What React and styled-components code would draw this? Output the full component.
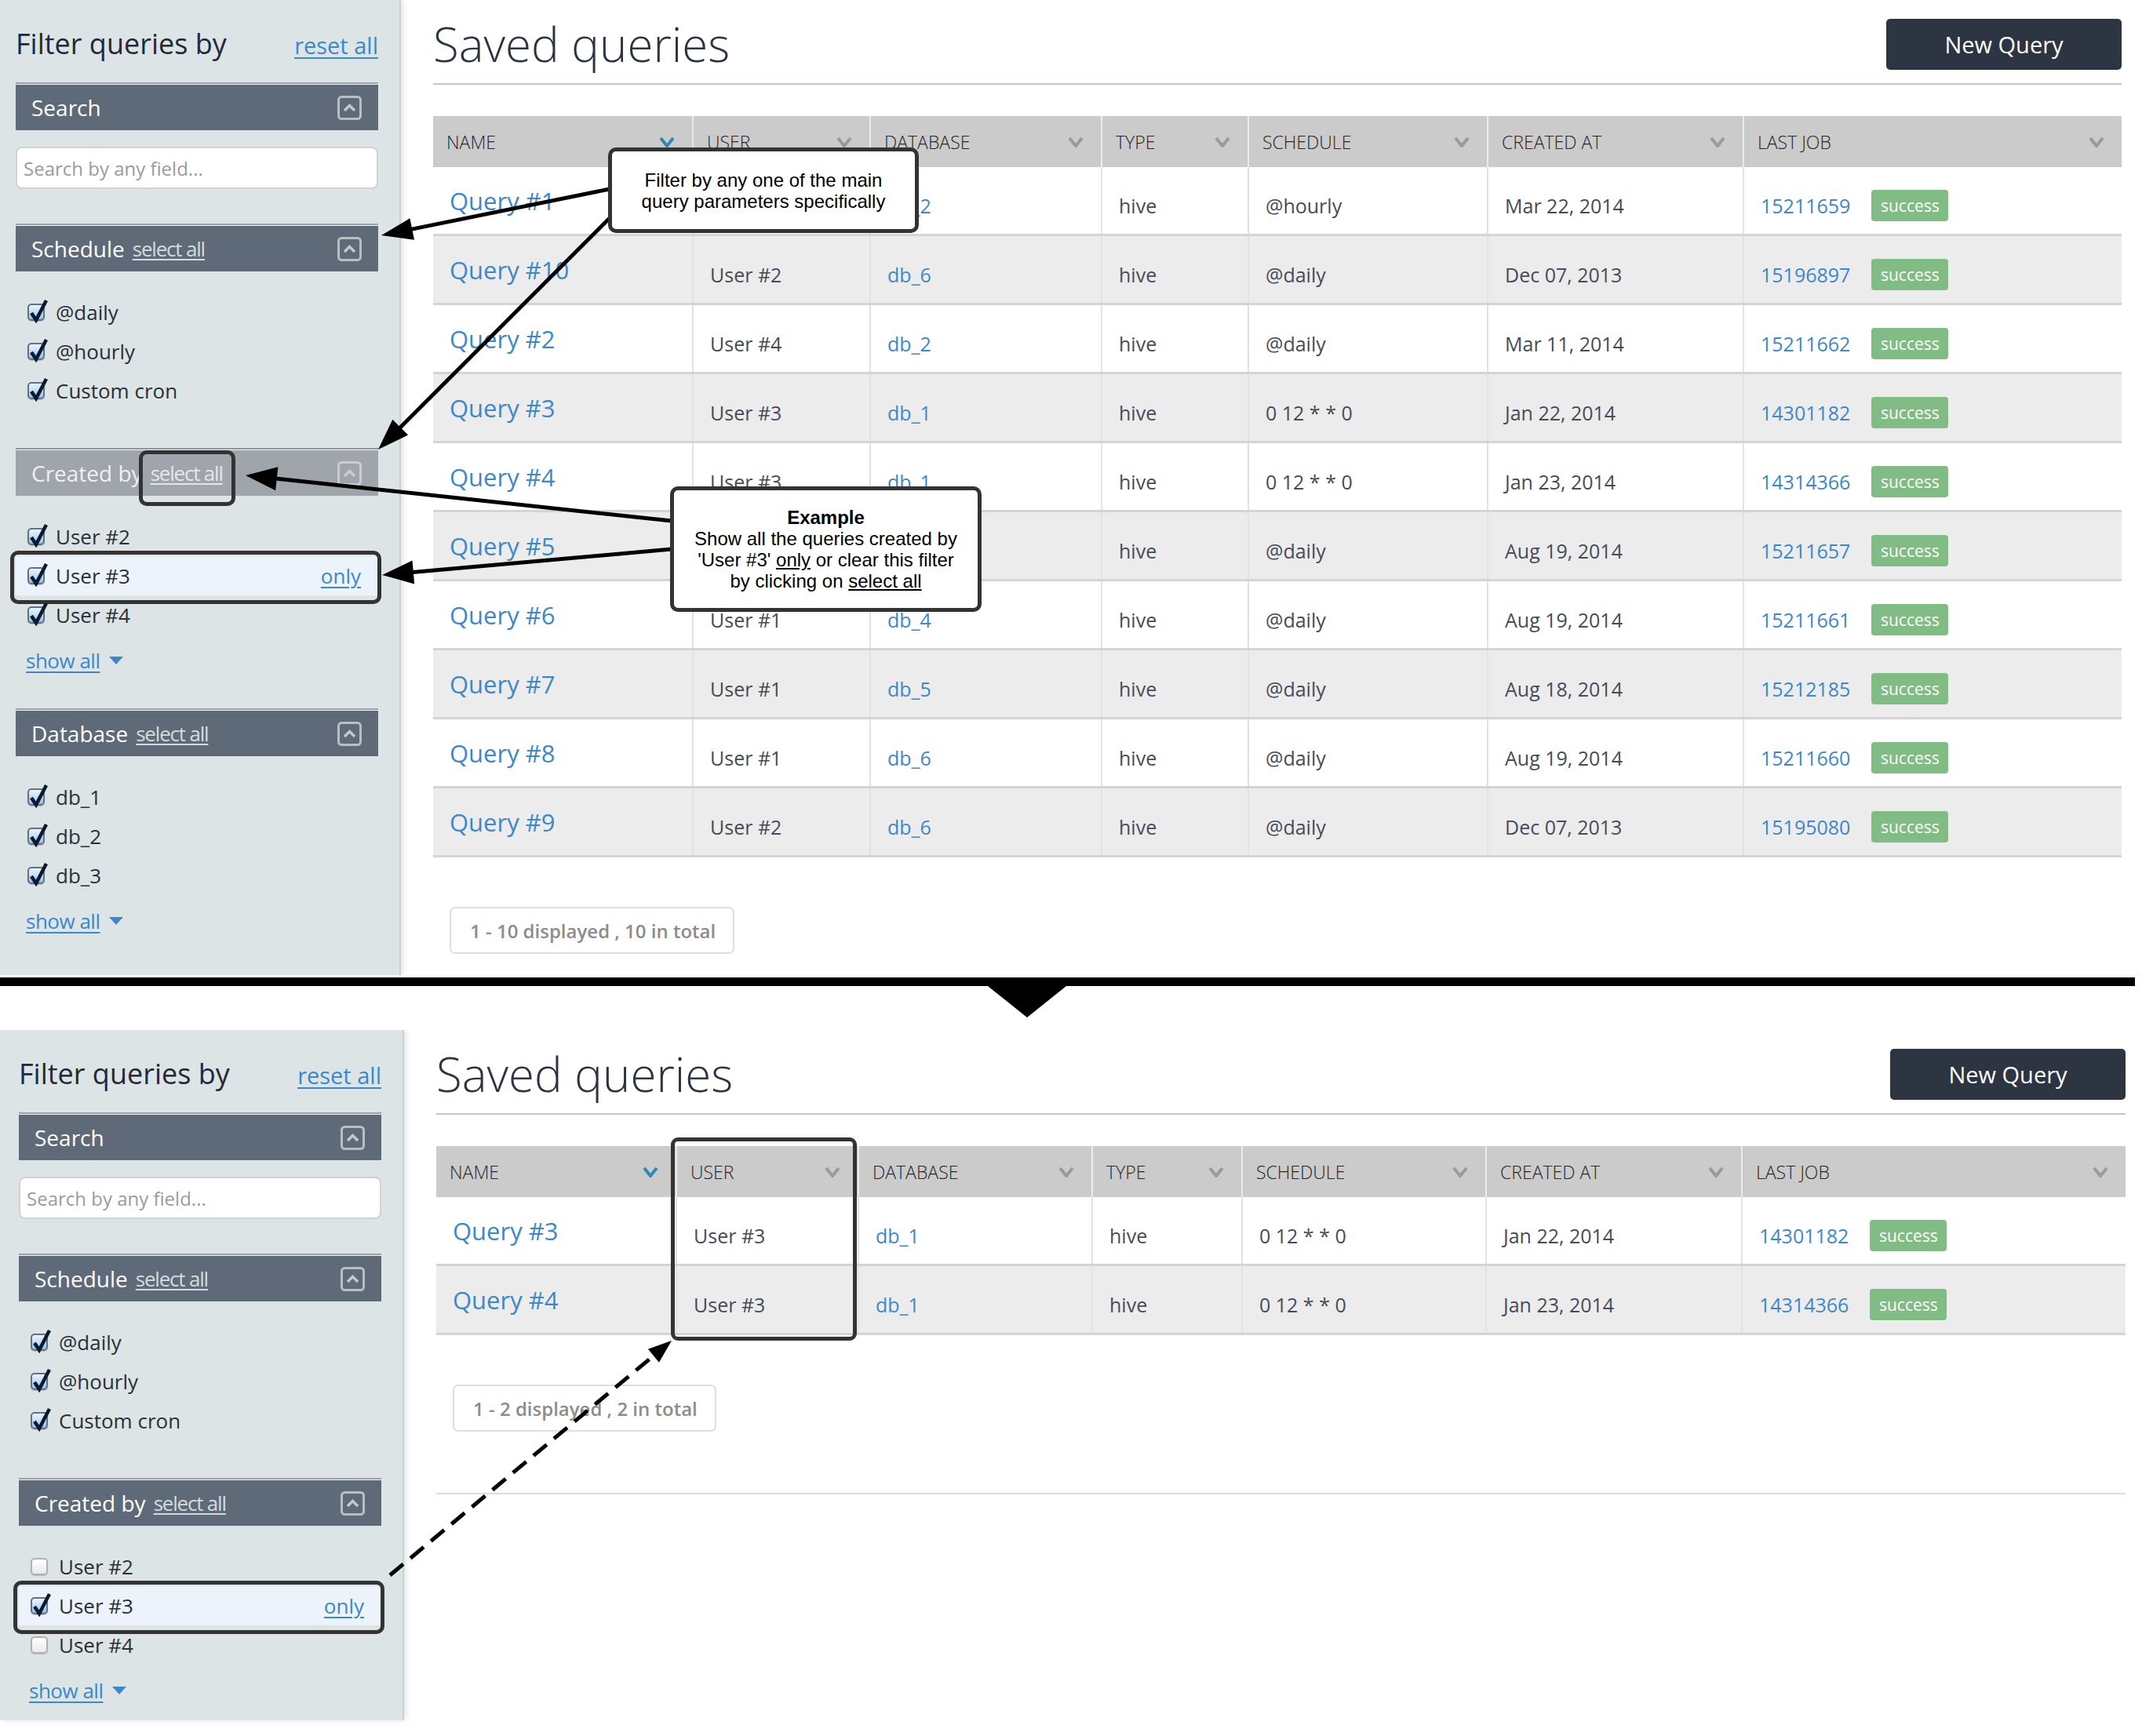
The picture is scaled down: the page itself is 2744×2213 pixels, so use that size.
import React from "react";
import styled, { createGlobalStyle, css } from "styled-components";

const GlobalStyle = createGlobalStyle`
  html, body {
    margin: 0;
    padding: 0;
    background: #ffffff;
  }
  body {
    font-family: "Open Sans", "Liberation Sans", sans-serif;
  }
  * {
    box-sizing: border-box;
  }
`;

const BLUE = "#3b88ca";

const Page = styled.div`
  position: relative;
  width: 2744px;
  height: 2213px;
  overflow: hidden;
  background: #ffffff;
`;

const Panel = styled.div`
  display: flex;
  align-items: flex-start;
  height: ${(p) => p.$height}px;
  overflow: hidden;
`;

/* ---------- sidebar ---------- */

const Sidebar = styled.aside`
  flex-shrink: 0;
  width: ${(p) => p.$width}px;
  height: ${(p) => p.$height}px;
  padding: 34px 27px 0 ${(p) => p.$pad}px;
  background: #dde4e6;
  border-right: 2px solid #c9cfd2;
  box-shadow: 3px 0 7px rgba(0, 0, 0, 0.1);
`;

const FilterHead = styled.div`
  display: flex;
  justify-content: space-between;
  align-items: baseline;
  height: 44px;
`;

const FilterTitle = styled.h2`
  margin: 0;
  font-size: 36px;
  font-weight: 400;
  line-height: 44px;
  color: #232a35;
`;

const ResetLink = styled.a`
  font-size: 29px;
  color: ${BLUE};
  text-decoration: underline;
  text-underline-offset: 4px;
`;

const Section = styled.section`
  margin-top: ${(p) => p.$gap}px;
`;

const BarRule = styled.div`
  height: 3px;
  border-top: 2px solid ${(p) => (p.$dim ? "#8f969c" : "#9aa0a5")};
  background: #f3f5f6;
`;

const Bar = styled.div`
  display: flex;
  align-items: center;
  height: 58px;
  padding: 0 21px 0 20px;
  background: ${(p) => (p.$dim ? "#9fa5ab" : "#5e6a78")};
`;

const BarTitle = styled.span`
  font-size: 28px;
  color: ${(p) => (p.$dim ? "#eef0f2" : "#ffffff")};
`;

const SelectAll = styled.a`
  position: relative;
  margin-left: 10px;
  font-size: 26px;
  line-height: 34px;
  letter-spacing: -1.2px;
  color: ${(p) => (p.$dim ? "#e4e7ea" : "#d5dade")};
  text-decoration: underline;
  text-underline-offset: 3px;

  ${(p) =>
    p.$marked &&
    css`
      &::after {
        content: "";
        position: absolute;
        left: -15px;
        right: -16px;
        top: 50%;
        height: 61px;
        margin-top: -29px;
        border: 5px solid #333333;
        border-radius: 10px;
      }
    `}
`;

const CollapseSvg = styled.svg`
  margin-left: auto;
  flex-shrink: 0;
`;

const SearchInput = styled.input`
  display: block;
  width: 100%;
  height: 54px;
  margin-top: 21px;
  padding: 0 8px;
  border: 2px solid #cfd3d6;
  border-radius: 8px;
  background: #ffffff;
  font-family: "Open Sans", sans-serif;
  font-size: 24px;
  color: #333;
  outline: none;

  &::placeholder {
    color: #9b9b9b;
  }
`;

const CheckList = styled.ul`
  list-style: none;
  margin: 27px 0 0;
  padding: 0;
`;

const CheckItem = styled.li`
  position: relative;
  display: flex;
  align-items: center;
  height: 50px;
  padding: 0 22px 0 15px;
  font-size: 26px;
  color: #2b2f36;
  background: ${(p) => (p.$active ? "#edf3fb" : "transparent")};

  ${(p) =>
    p.$marked &&
    css`
      &::after {
        content: "";
        position: absolute;
        left: -7px;
        right: -4px;
        top: -7px;
        bottom: -11px;
        border: 5px solid #333333;
        border-radius: 10px;
      }
    `}
`;

const OnlyLink = styled.a`
  margin-left: auto;
  font-size: 26px;
  color: ${BLUE};
  text-decoration: underline;
  text-underline-offset: 4px;
`;

const Box = styled.span`
  position: relative;
  flex-shrink: 0;
  width: 22px;
  height: 22px;
  margin-right: 14px;
  border: 2px solid ${(p) => (p.$on ? "#66717d" : "#aeb2b6")};
  border-radius: 5px;
  background: ${(p) =>
    p.$on
      ? "linear-gradient(#eaf3fd 0%, #c4def6 50%, #8dc0ee 100%)"
      : "linear-gradient(#ffffff, #e9e9e9)"};
  box-shadow: 0 1px 1px rgba(0, 0, 0, 0.18);
`;

const TickSvg = styled.svg`
  position: absolute;
  left: -2px;
  top: -11px;
`;

const ShowAll = styled.div`
  display: flex;
  align-items: center;
  gap: 12px;
  height: 34px;
  margin-top: 16px;
  padding-left: 13px;
`;

const ShowAllLink = styled.a`
  font-size: 26px;
  letter-spacing: -0.5px;
  color: ${BLUE};
  text-decoration: underline;
  text-underline-offset: 4px;
`;

const DownCaret = styled.span`
  width: 0;
  height: 0;
  border-left: 9px solid transparent;
  border-right: 9px solid transparent;
  border-top: 10px solid ${BLUE};
`;

/* ---------- main area ---------- */

const Main = styled.main`
  flex-shrink: 0;
  width: ${(p) => p.$width}px;
  margin-left: 41px;
`;

const MainHead = styled.header`
  display: flex;
  justify-content: space-between;
  align-items: center;
  padding: 16px 0 10px;
  border-bottom: 2px solid #c2c8cb;
  box-shadow: 0 3px 3px -2px rgba(0, 0, 0, 0.06);
`;

const PageTitle = styled.h1`
  margin: 0;
  font-size: 60px;
  font-weight: 300;
  line-height: 80px;
  color: #2b3440;
`;

const NewButton = styled.button`
  width: 300px;
  height: 65px;
  border: 0;
  border-radius: 5px;
  background: #2c3541;
  color: #ffffff;
  font-family: "Open Sans", sans-serif;
  font-size: 29px;
`;

const Table = styled.div`
  margin-top: 40px;
`;

const HeadRow = styled.div`
  display: grid;
  grid-template-columns: ${(p) => p.$cols};
  height: 65px;
  background: #cbcbcb;
`;

const HeadCell = styled.div`
  display: flex;
  align-items: center;
  justify-content: space-between;
  padding: 0 22px 0 17px;
  border-left: 2px solid #ececec;
  font-size: 23px;
  font-weight: 300;
  color: #262626;
  text-transform: uppercase;

  &:first-child {
    border-left: 0;
  }
`;

const Row = styled.div`
  display: grid;
  grid-template-columns: ${(p) => p.$cols};
  height: 88px;
  background: ${(p) => (p.$alt ? "#ececec" : "#ffffff")};
  border-bottom: 3px solid #d4d4d4;
`;

const Cell = styled.div`
  display: flex;
  align-items: center;
  padding: 12px 10px 0 21px;
  border-left: 2px solid #e2e2e2;
  font-size: 25px;
  color: #454c57;
  white-space: nowrap;

  &:first-child {
    border-left: 0;
    padding-top: 0;
  }
`;

const QueryLink = styled.a`
  font-size: 31px;
  color: ${BLUE};
`;

const DataLink = styled.a`
  color: ${BLUE};
`;

const Badge = styled.span`
  display: inline-flex;
  align-items: center;
  justify-content: center;
  width: 98px;
  height: 40px;
  margin-left: 27px;
  border-radius: 4px;
  background: #80bc84;
  color: #ffffff;
  font-size: 21px;
`;

const Pager = styled.div`
  display: inline-flex;
  align-items: center;
  height: 60px;
  margin: 63px 0 0 21px;
  padding: 0 22px 0 24px;
  border: 2px solid #dedede;
  border-radius: 7px;
  font-size: 24px;
  font-weight: 600;
  color: #8c8c8c;
`;

const EndRule = styled.div`
  height: 2px;
  margin-top: 78px;
  background: #dcdcdc;
`;

/* ---------- separators and annotations ---------- */

const Divider = styled.div`
  width: 2721px;
  height: 11px;
  margin-top: 3px;
  background: #000000;
`;

const DividerArrow = styled.div`
  width: 0;
  height: 0;
  margin: 0 0 16px 1259px;
  border-left: 50px solid transparent;
  border-right: 50px solid transparent;
  border-top: 40px solid #000000;
`;

const Overlay = styled.svg`
  position: absolute;
  top: 0;
  left: 0;
  z-index: 2;
  pointer-events: none;
`;

const Callout = styled.div`
  position: absolute;
  z-index: 3;
  left: ${(p) => p.$x}px;
  top: ${(p) => p.$y}px;
  width: ${(p) => p.$w}px;
  height: ${(p) => p.$h}px;
  display: flex;
  flex-direction: column;
  align-items: center;
  justify-content: center;
  background: #ffffff;
  border: 5px solid #333333;
  border-radius: 10px;
  font-family: "Liberation Sans", Arial, sans-serif;
  font-size: 24px;
  line-height: 27px;
  color: #000000;
  text-align: center;
`;

const ColumnMark = styled.div`
  position: absolute;
  z-index: 3;
  left: 855px;
  top: 1450px;
  width: 237px;
  height: 259px;
  border: 5px solid #333333;
  border-radius: 9px;
`;

/* ---------- small drawings ---------- */

const Checkbox = ({ on }) => (
  <Box $on={on}>
    {on && (
      <TickSvg width="28" height="34" viewBox="0 0 28 34">
        <path
          d="M5 21 L11 30 L24 5"
          fill="none"
          stroke="#0b1a30"
          strokeWidth="4.5"
          strokeLinejoin="miter"
        />
      </TickSvg>
    )}
  </Box>
);

const Collapse = ({ dim }) => (
  <CollapseSvg width="31" height="31" viewBox="0 0 31 31">
    <rect
      x="1.5"
      y="1.5"
      width="28"
      height="28"
      rx="4"
      fill="none"
      stroke={dim ? "#c9cdd1" : "#b9bec4"}
      strokeWidth="3"
    />
    <polyline
      points="9,19 15.5,12.5 22,19"
      fill="none"
      stroke={dim ? "#c9cdd1" : "#c4c8cc"}
      strokeWidth="3.5"
    />
  </CollapseSvg>
);

const Chevron = ({ active }) => (
  <svg width="20" height="14" viewBox="0 0 20 14">
    <polyline
      points="2,2 10,12 18,2"
      fill="none"
      stroke={active ? "#2f8ab3" : "#9a9a9a"}
      strokeWidth="4"
    />
  </svg>
);

const Arrow = ({ from, to, head = 38, wide = 28, dashed }) => {
  const [x1, y1] = from;
  const [x2, y2] = to;
  const dx = x2 - x1;
  const dy = y2 - y1;
  const len = Math.hypot(dx, dy);
  const ux = dx / len;
  const uy = dy / len;
  const bx = x2 - ux * head;
  const by = y2 - uy * head;
  const px = (-uy * wide) / 2;
  const py = (ux * wide) / 2;
  return (
    <g>
      <line
        x1={x1}
        y1={y1}
        x2={bx + ux * 4}
        y2={by + uy * 4}
        stroke="#000"
        strokeWidth="5"
        strokeDasharray={dashed ? "22 12" : undefined}
      />
      <polygon
        points={`${x2},${y2} ${bx + px},${by + py} ${bx - px},${by - py}`}
        fill="#000"
      />
    </g>
  );
};

/* ---------- data ---------- */

const TOP_COLS = "330px 226px 295px 187px 305px 326px 1fr";
const BOTTOM_COLS = "305px 232px 298px 191px 311px 326px 1fr";

const HEADS = ["Name", "User", "Database", "Type", "Schedule", "Created at", "Last job"];

const TOP_ROWS = [
  ["Query #1", "User #2", "db_2", "@hourly", "Mar 22, 2014", "15211659"],
  ["Query #10", "User #2", "db_6", "@daily", "Dec 07, 2013", "15196897"],
  ["Query #2", "User #4", "db_2", "@daily", "Mar 11, 2014", "15211662"],
  ["Query #3", "User #3", "db_1", "0 12 * * 0", "Jan 22, 2014", "14301182"],
  ["Query #4", "User #3", "db_1", "0 12 * * 0", "Jan 23, 2014", "14314366"],
  ["Query #5", "User #1", "db_3", "@daily", "Aug 19, 2014", "15211657"],
  ["Query #6", "User #1", "db_4", "@daily", "Aug 19, 2014", "15211661"],
  ["Query #7", "User #1", "db_5", "@daily", "Aug 18, 2014", "15212185"],
  ["Query #8", "User #1", "db_6", "@daily", "Aug 19, 2014", "15211660"],
  ["Query #9", "User #2", "db_6", "@daily", "Dec 07, 2013", "15195080"],
];

const BOTTOM_ROWS = [
  ["Query #3", "User #3", "db_1", "0 12 * * 0", "Jan 22, 2014", "14301182"],
  ["Query #4", "User #3", "db_1", "0 12 * * 0", "Jan 23, 2014", "14314366"],
];

/* ---------- pieces ---------- */

const FilterBlock = ({ title, gap, dim, selectable, marked, children }) => (
  <Section $gap={gap}>
    <BarRule $dim={dim} />
    <Bar $dim={dim}>
      <BarTitle $dim={dim}>{title}</BarTitle>
      {selectable && (
        <SelectAll $dim={dim} $marked={marked}>
          select all
        </SelectAll>
      )}
      <Collapse dim={dim} />
    </Bar>
    {children}
  </Section>
);

const Checks = ({ items }) => (
  <CheckList>
    {items.map((it) => (
      <CheckItem key={it.label} $active={it.only} $marked={it.only}>
        <Checkbox on={it.on} />
        {it.label}
        {it.only && <OnlyLink>only</OnlyLink>}
      </CheckItem>
    ))}
  </CheckList>
);

const ShowAllRow = () => (
  <ShowAll>
    <ShowAllLink>show all</ShowAllLink>
    <DownCaret />
  </ShowAll>
);

const SCHEDULES = [
  { label: "@daily", on: true },
  { label: "@hourly", on: true },
  { label: "Custom cron", on: true },
];

const FilterSidebar = ({ width, height, pad, filtered }) => (
  <Sidebar $width={width} $height={height} $pad={pad}>
    <FilterHead>
      <FilterTitle>Filter queries by</FilterTitle>
      <ResetLink>reset all</ResetLink>
    </FilterHead>

    <FilterBlock title="Search" gap={27}>
      <SearchInput placeholder="Search by any field..." />
    </FilterBlock>

    <FilterBlock title="Schedule" gap={44} selectable>
      <Checks items={SCHEDULES} />
    </FilterBlock>

    <FilterBlock
      title="Created by"
      gap={48}
      selectable
      dim={!filtered}
      marked={!filtered}
    >
      <Checks
        items={[
          { label: "User #2", on: !filtered },
          { label: "User #3", on: true, only: true },
          { label: "User #4", on: !filtered },
        ]}
      />
      <ShowAllRow />
    </FilterBlock>

    {!filtered && (
      <FilterBlock title="Database" gap={44} selectable>
        <Checks
          items={[
            { label: "db_1", on: true },
            { label: "db_2", on: true },
            { label: "db_3", on: true },
          ]}
        />
        <ShowAllRow />
      </FilterBlock>
    )}
  </Sidebar>
);

const QueryTable = ({ cols, rows }) => (
  <Table>
    <HeadRow $cols={cols}>
      {HEADS.map((h, i) => (
        <HeadCell key={h}>
          {h}
          <Chevron active={i === 0} />
        </HeadCell>
      ))}
    </HeadRow>
    {rows.map((r, i) => (
      <Row key={r[0]} $cols={cols} $alt={i % 2 === 1}>
        <Cell>
          <QueryLink>{r[0]}</QueryLink>
        </Cell>
        <Cell>{r[1]}</Cell>
        <Cell>
          <DataLink>{r[2]}</DataLink>
        </Cell>
        <Cell>hive</Cell>
        <Cell>{r[3]}</Cell>
        <Cell>{r[4]}</Cell>
        <Cell>
          <DataLink>{r[5]}</DataLink>
          <Badge>success</Badge>
        </Cell>
      </Row>
    ))}
  </Table>
);

const QueriesMain = ({ width, cols, rows, total, endRule }) => (
  <Main $width={width}>
    <MainHead>
      <PageTitle>Saved queries</PageTitle>
      <NewButton>New Query</NewButton>
    </MainHead>
    <QueryTable cols={cols} rows={rows} />
    <Pager>
      1 - {total} displayed , {total} in total
    </Pager>
    {endRule && <EndRule />}
  </Main>
);

export default function App() {
  return (
    <>
      <GlobalStyle />
      <Page>
        <Panel $height={1243}>
          <FilterSidebar width={511} height={1243} pad={20} />
          <QueriesMain width={2152} cols={TOP_COLS} rows={TOP_ROWS} total={10} />
        </Panel>

        <Divider />
        <DividerArrow />

        <Panel $height={900}>
          <FilterSidebar width={515} height={880} pad={24} filtered />
          <QueriesMain
            width={2153}
            cols={BOTTOM_COLS}
            rows={BOTTOM_ROWS}
            total={2}
            endRule
          />
        </Panel>

        <Overlay width="2744" height="2213" viewBox="0 0 2744 2213">
          <Arrow from={[777, 241]} to={[486, 300]} head={40} wide={28} />
          <Arrow from={[777, 278]} to={[482, 573]} head={40} wide={28} />
          <Arrow from={[856, 664]} to={[313, 606]} head={40} wide={30} />
          <Arrow from={[856, 700]} to={[487, 733]} head={40} wide={30} />
          <Arrow from={[497, 2008]} to={[856, 1709]} head={30} wide={22} dashed />
        </Overlay>

        <Callout $x={775} $y={188} $w={396} $h={109}>
          <span>Filter by any one of the main</span>
          <span>query parameters specifically</span>
        </Callout>

        <Callout $x={854} $y={620} $w={397} $h={160}>
          <strong>Example</strong>
          <span>Show all the queries created by</span>
          <span>
            'User #3' <u>only</u> or clear this filter
          </span>
          <span>
            by clicking on <u>select all</u>
          </span>
        </Callout>

        <ColumnMark />
      </Page>
    </>
  );
}
